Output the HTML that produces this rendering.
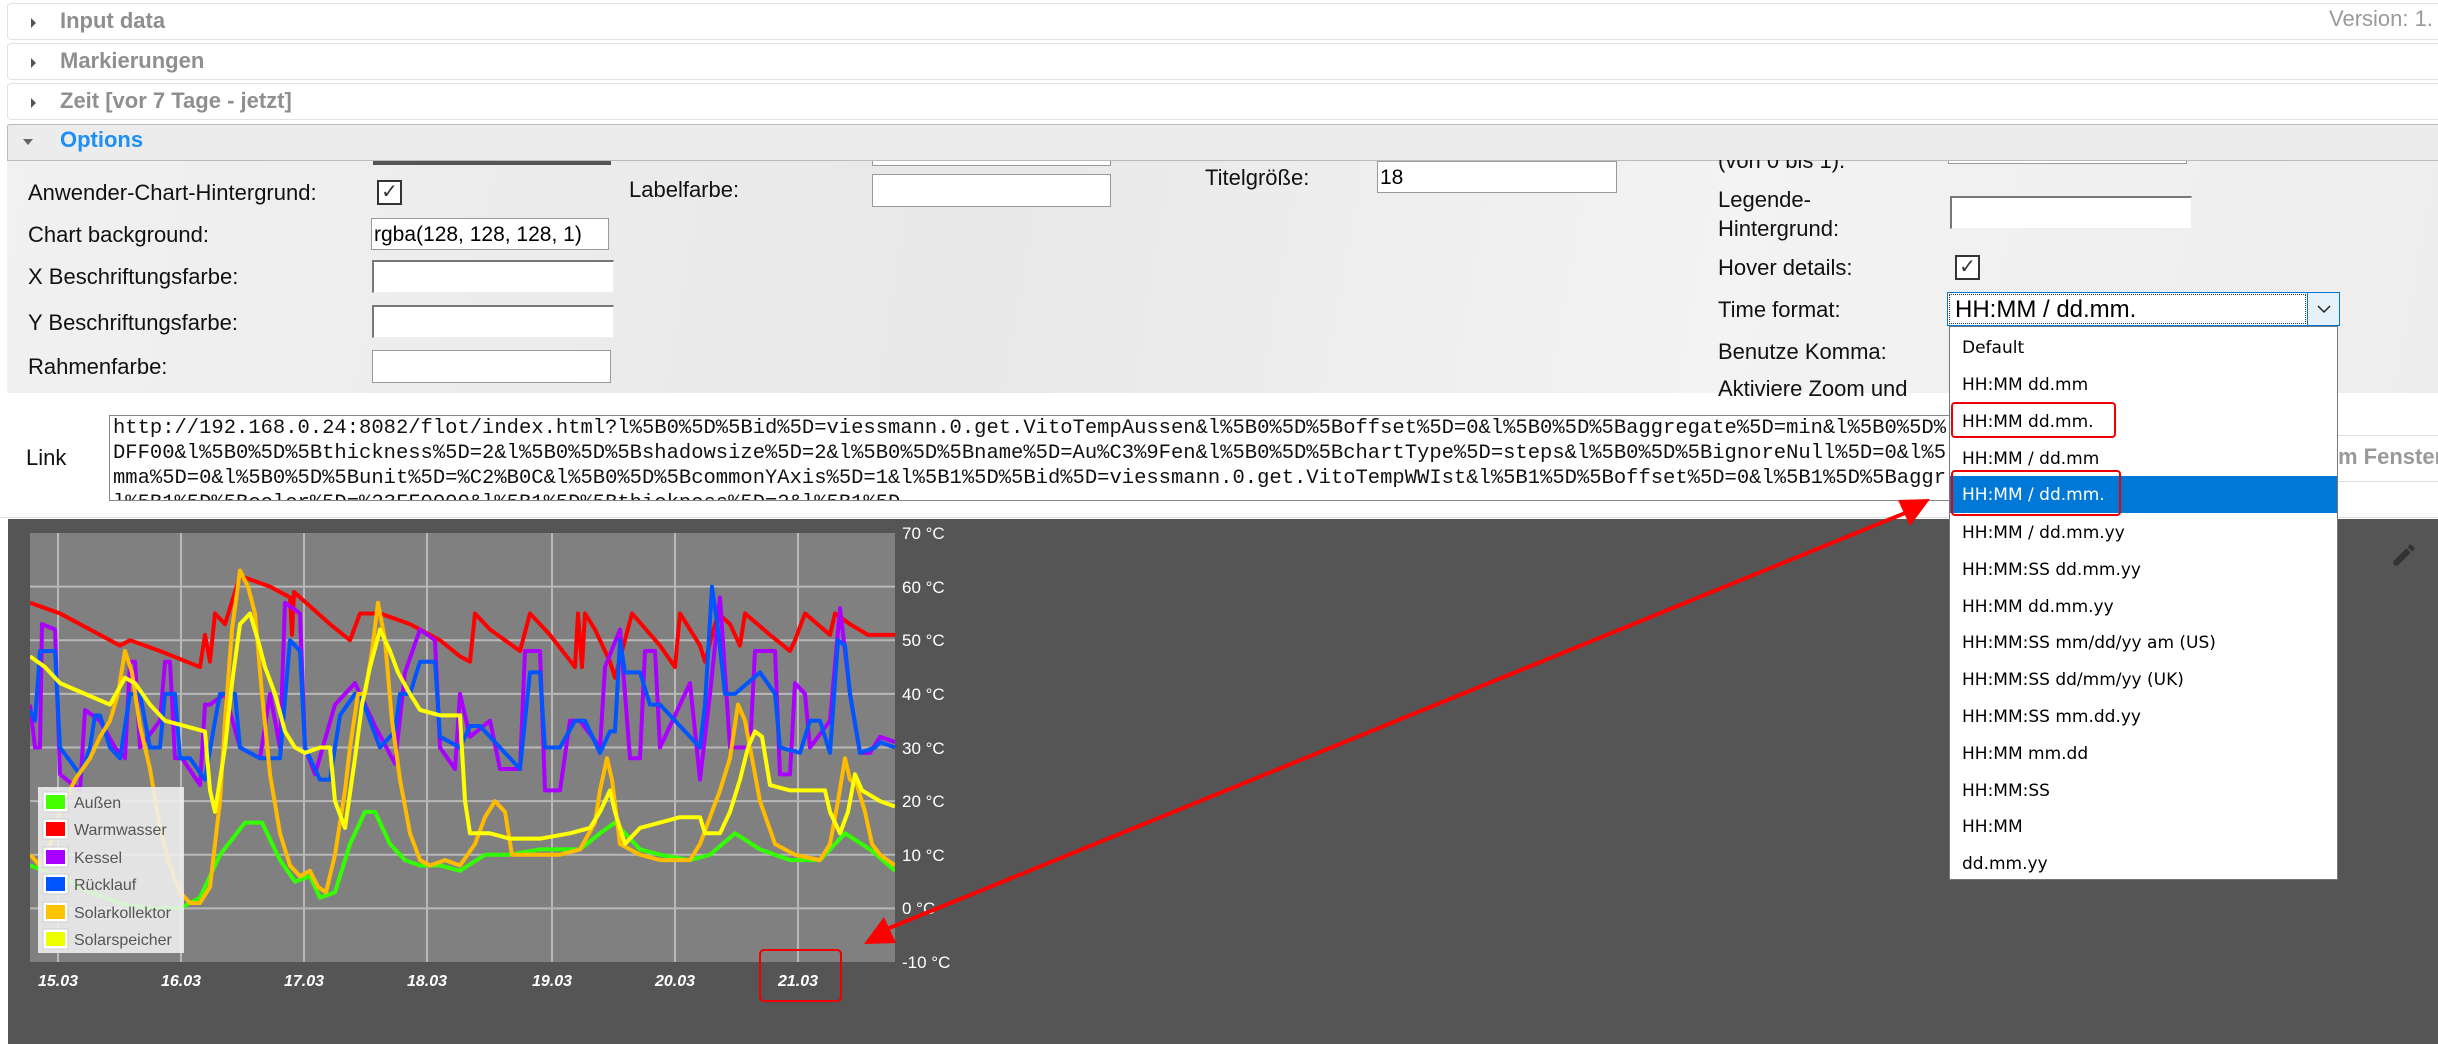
<!DOCTYPE html>
<html><head><meta charset="utf-8">
<style>
*{margin:0;padding:0;box-sizing:border-box}
body{width:2438px;height:1044px;overflow:hidden;background:#fff;font-family:"Liberation Sans",Arial,sans-serif;position:relative}
.a{position:absolute}
.hdr{position:absolute;left:7px;width:2440px;height:37px;border:1px solid #e2e2e2;border-radius:4px;background:#fff}
.hdr .t{position:absolute;left:52px;top:4px;font-weight:bold;font-size:22px;color:#8f8f8f}
.tri{position:absolute;left:23px;top:14px;width:0;height:0;border-top:5px solid transparent;border-bottom:5px solid transparent;border-left:5px solid #555}
.lbl{position:absolute;font-size:22px;color:#111;white-space:nowrap}
.inp{position:absolute;background:#fff;border:1px solid #999}
.inp2{position:absolute;background:#fff;border-top:2px solid #777;border-left:2px solid #777;border-right:1px solid #eee;border-bottom:1px solid #eee}
.cb{position:absolute;width:25px;height:25px;border:2px solid #333;background:#fff;font-size:20px;line-height:20px;text-align:center;color:#333}
.dd div{position:absolute;left:12px;font-family:"DejaVu Sans",sans-serif;font-size:17px;color:#000;white-space:nowrap}
</style></head><body>

<div class="hdr" style="top:3px"><div class="tri"></div><div class="t">Input data</div></div>
<div class="hdr" style="top:43px"><div class="tri"></div><div class="t">Markierungen</div></div>
<div class="hdr" style="top:83px"><div class="tri"></div><div class="t">Zeit [vor 7 Tage - jetzt]</div></div>
<div class="a" style="left:2329px;top:6px;font-size:22px;color:#999;white-space:nowrap">Version: 1.</div>

<div class="a" style="left:7px;top:124px;width:2440px;height:269px;background:linear-gradient(100deg,#f1f1f1 0%,#e8e8e8 40%,#f3f3f3 70%,#ededed 100%)"></div>
<div class="a" style="left:7px;top:124px;width:2440px;height:37px;background:#ececec;border:1px solid #bbb;border-radius:3px 3px 0 0"></div>
<div class="a" style="left:23px;top:139px;width:0;height:0;border-left:5px solid transparent;border-right:5px solid transparent;border-top:6px solid #666"></div>
<div class="a" style="left:60px;top:127px;font-weight:bold;font-size:22px;color:#1e8ff5">Options</div>

<div class="a" style="left:373px;top:161px;width:238px;height:4px;background:#555"></div>
<div class="a" style="left:872px;top:161px;width:239px;height:5px;border:1px solid #999;border-top:none;background:#fff"></div>
<div class="a" style="left:1948px;top:161px;width:239px;height:3px;border:1px solid #999;border-top:none;background:#fff"></div>

<div class="lbl" style="left:28px;top:180px">Anwender-Chart-Hintergrund:</div>
<div class="cb" style="left:377px;top:180px">✓</div>
<div class="lbl" style="left:28px;top:222px">Chart background:</div>
<div class="inp" style="left:371px;top:218px;width:238px;height:32px;font-size:21px;padding:4px 2px;color:#000">rgba(128, 128, 128, 1)</div>
<div class="lbl" style="left:28px;top:264px">X Beschriftungsfarbe:</div>
<div class="inp2" style="left:372px;top:260px;width:242px;height:33px"></div>
<div class="lbl" style="left:28px;top:310px">Y Beschriftungsfarbe:</div>
<div class="inp2" style="left:372px;top:305px;width:242px;height:33px"></div>
<div class="lbl" style="left:28px;top:354px">Rahmenfarbe:</div>
<div class="inp" style="left:372px;top:350px;width:239px;height:33px"></div>

<div class="lbl" style="left:629px;top:177px">Labelfarbe:</div>
<div class="inp" style="left:872px;top:174px;width:239px;height:33px"></div>

<div class="lbl" style="left:1205px;top:165px">Titelgröße:</div>
<div class="inp" style="left:1377px;top:161px;width:240px;height:32px;font-size:21px;padding:4px 2px">18</div>

<div class="lbl" style="left:1718px;top:148px;clip-path:inset(12px 0 0 0)">(von 0 bis 1).</div>
<div class="lbl" style="left:1718px;top:187px">Legende-</div>
<div class="lbl" style="left:1718px;top:216px">Hintergrund:</div>
<div class="inp2" style="left:1950px;top:196px;width:242px;height:33px"></div>
<div class="lbl" style="left:1718px;top:255px">Hover details:</div>
<div class="cb" style="left:1955px;top:255px">✓</div>
<div class="lbl" style="left:1718px;top:297px">Time format:</div>
<div class="lbl" style="left:1718px;top:339px">Benutze Komma:</div>
<div class="lbl" style="left:1718px;top:376px;clip-path:inset(0 0 5px 0)">Aktiviere Zoom und</div>

<div class="a" style="left:1947px;top:292px;width:393px;height:34px;border:1px solid #0078d7;background:#fff"></div>
<div class="a" style="left:1949px;top:294px;width:357px;height:30px;border:1px dotted #333"></div>
<div class="a" style="left:1955px;top:296px;font-size:24px;color:#000">HH:MM / dd.mm.</div>
<div class="a" style="left:2307px;top:292px;width:33px;height:34px;background:#e5f1fb;border:1px solid #0078d7"></div>
<svg class="a" style="left:2317px;top:304px" width="14" height="10"><path d="M1 2 L7 8 L13 2" fill="none" stroke="#222" stroke-width="1.5"/></svg>

<div class="lbl" style="left:26px;top:445px">Link</div>
<div class="a" style="left:109px;top:415px;width:1850px;height:86px;border:1px solid #888;overflow:hidden;background:#fff">
<div style="position:absolute;left:3px;top:0;font-family:'Liberation Mono',monospace;font-size:20.5px;line-height:25px;color:#111;white-space:pre">http://192.168.0.24:8082/flot/index.html?l%5B0%5D%5Bid%5D=viessmann.0.get.VitoTempAussen&amp;l%5B0%5D%5Boffset%5D=0&amp;l%5B0%5D%5Baggregate%5D=min&amp;l%5B0%5D%
DFF00&amp;l%5B0%5D%5Bthickness%5D=2&amp;l%5B0%5D%5Bshadowsize%5D=2&amp;l%5B0%5D%5Bname%5D=Au%C3%9Fen&amp;l%5B0%5D%5BchartType%5D=steps&amp;l%5B0%5D%5BignoreNull%5D=0&amp;l%5
mma%5D=0&amp;l%5B0%5D%5Bunit%5D=%C2%B0C&amp;l%5B0%5D%5BcommonYAxis%5D=1&amp;l%5B1%5D%5Bid%5D=viessmann.0.get.VitoTempWWIst&amp;l%5B1%5D%5Boffset%5D=0&amp;l%5B1%5D%5Baggr
l%5B1%5D%5Bcolor%5D=%23FF0000&amp;l%5B1%5D%5Bthickness%5D=2&amp;l%5B1%5D</div></div>
<div class="a" style="left:2300px;top:435px;width:140px;height:47px;border-top:1px solid #ddd;border-bottom:1px solid #ddd;background:#fff"></div>
<div class="a" style="left:2338px;top:444px;font-size:22px;font-weight:bold;color:#999;white-space:nowrap">m Fenster</div>
<div class="a" style="left:0;top:517px;width:2438px;height:1px;background:#ddd"></div>

<div class="a" style="left:8px;top:519px;width:2430px;height:525px;background:#555"></div>
<svg class="a" style="left:2390px;top:541px" width="28" height="28" viewBox="0 0 24 24"><path d="M3 17.25V21h3.75L17.81 9.94l-3.75-3.75L3 17.25zM20.71 7.04a1 1 0 0 0 0-1.41l-2.34-2.34a1 1 0 0 0-1.41 0l-1.83 1.83 3.75 3.75 1.83-1.83z" fill="#333"/></svg>

<svg class="a" style="left:0;top:0" width="2438" height="1044">
<defs><clipPath id="pc"><rect x="30" y="533" width="865" height="429"/></clipPath></defs>
<rect x="30" y="533" width="865" height="429" fill="#808080"/>
<g stroke="#b8b8b8" stroke-width="2">
<line x1="58" y1="533" x2="58" y2="962"/><line x1="181" y1="533" x2="181" y2="962"/><line x1="304" y1="533" x2="304" y2="962"/><line x1="427" y1="533" x2="427" y2="962"/><line x1="552" y1="533" x2="552" y2="962"/><line x1="675" y1="533" x2="675" y2="962"/><line x1="798" y1="533" x2="798" y2="962"/>
<line x1="30" y1="586.6" x2="895" y2="586.6"/><line x1="30" y1="640.3" x2="895" y2="640.3"/><line x1="30" y1="693.9" x2="895" y2="693.9"/><line x1="30" y1="747.5" x2="895" y2="747.5"/><line x1="30" y1="801.1" x2="895" y2="801.1"/><line x1="30" y1="854.8" x2="895" y2="854.8"/><line x1="30" y1="908.4" x2="895" y2="908.4"/>
</g>
<g clip-path="url(#pc)" fill="none" stroke-width="4" stroke-linejoin="round">
<g transform="translate(0,533) scale(1,-5.3625) translate(0,-70)">
<polyline vector-effect="non-scaling-stroke" stroke="#33ff00" points="30,8 60,6 90,3 120,1 150,0 180,0 200,2 220,10 245,16 262,16 280,9 295,5 310,6 320,2 335,3 350,12 365,18 375,18 390,12 405,9 420,8 440,8 460,7 485,10 510,10 540,11 580,11 600,14 615,16 640,11 660,10 690,9 710,10 735,14 760,11 790,9 820,9 845,14 870,11 895,7"/>
<polyline vector-effect="non-scaling-stroke" stroke="#ff0000" points="30,57 60,55 90,52 120,49 130,50 160,48 200,45 205,51 210,46 215,55 225,53 240,62 270,60 290,58 292,51 294,59 300,58 330,53 350,50 360,55 380,55 410,53 440,50 460,47 470,46 475,55 490,52 520,48 530,55 550,51 575,45 578,55 582,45 585,55 595,52 610,46 615,43 632,55 660,49 675,45 680,55 700,49 705,46 718,55 730,53 740,49 745,55 770,51 790,48 795,50 805,55 830,51 835,55 850,53 868,51 895,51"/>
<polyline vector-effect="non-scaling-stroke" stroke="#aa00ff" points="30,38 35,30 40,30 42,53 55,52 60,25 80,22 85,37 100,35 115,30 125,28 130,46 135,46 140,30 160,35 165,46 170,46 175,28 182,28 200,23 205,38 210,38 225,40 240,30 260,28 270,40 280,30 285,57 300,55 305,30 315,25 335,38 355,42 375,34 395,27 405,44 420,52 435,50 440,30 455,26 460,40 470,32 490,35 500,26 520,26 525,48 540,48 545,22 560,22 570,35 580,35 600,30 605,45 620,52 630,28 640,28 645,48 655,48 660,30 690,42 700,24 710,40 720,58 730,30 750,30 755,48 775,48 780,25 790,25 795,42 805,40 810,30 830,35 840,56 850,40 860,29 870,29 880,32 895,31"/>
<polyline vector-effect="non-scaling-stroke" stroke="#0055ff" points="30,37 35,35 40,48 55,48 60,30 80,25 90,30 95,36 100,36 110,30 120,28 130,40 140,40 150,30 160,30 165,40 175,40 180,28 190,28 205,24 215,35 220,40 235,40 240,30 260,28 280,28 290,50 300,48 305,30 320,24 330,24 340,36 355,40 360,40 380,30 395,33 400,40 410,40 420,46 435,46 440,32 460,30 470,34 480,34 500,30 520,26 530,44 540,44 545,30 560,30 575,35 585,35 600,29 610,33 615,33 620,50 625,44 640,44 650,38 660,38 690,32 700,30 705,38 712,60 718,52 725,40 735,40 760,44 775,40 780,30 800,29 810,35 820,35 830,29 838,50 845,49 850,40 860,29 875,30 880,31 895,30"/>
<polyline vector-effect="non-scaling-stroke" stroke="#ffbb00" points="30,10 40,8 50,12 60,18 75,24 90,28 100,32 110,35 118,40 125,48 132,44 140,34 150,26 160,15 170,8 180,3 190,1 200,1 210,4 220,20 225,35 232,52 240,63 248,60 255,55 262,40 270,25 280,14 290,8 300,6 310,7 318,4 326,3 335,10 345,22 350,30 358,40 365,40 372,48 378,57 385,50 392,35 400,24 410,14 420,9 430,8 445,9 460,8 475,12 485,17 495,20 505,18 512,10 530,10 560,10 580,11 595,16 600,22 607,28 612,24 620,12 640,10 660,9 690,9 700,12 712,18 720,22 730,28 738,38 745,35 752,28 760,20 775,12 795,10 820,9 830,12 838,20 845,28 850,24 857,23 865,18 872,12 880,10 895,8"/>
<polyline vector-effect="non-scaling-stroke" stroke="#ffff00" points="30,47 45,45 60,42 85,40 110,38 125,43 135,42 150,38 165,35 185,34 205,33 210,22 215,18 225,30 232,42 240,53 250,55 258,50 265,45 275,40 285,33 295,30 305,29 320,30 330,30 335,20 345,15 355,28 362,38 370,45 380,52 390,48 398,44 410,40 420,37 440,36 460,36 465,20 470,14 490,14 510,13 540,13 570,14 590,15 600,18 610,22 615,18 625,12 640,15 660,16 680,17 700,17 705,14 720,14 730,18 740,24 748,30 755,33 762,32 770,23 790,22 825,22 830,18 840,14 848,18 855,25 862,22 880,20 895,19"/>
</g></g>
<g font-family="Liberation Sans,sans-serif" font-size="17" fill="#fff">
<text x="902" y="539">70 °C</text><text x="902" y="593">60 °C</text><text x="902" y="646">50 °C</text><text x="902" y="700">40 °C</text><text x="902" y="754">30 °C</text><text x="902" y="807">20 °C</text><text x="902" y="861">10 °C</text><text x="902" y="914">0 °C</text><text x="902" y="968">-10 °C</text>
</g>
<g font-family="Liberation Sans,sans-serif" font-size="16" font-weight="bold" font-style="italic" fill="#fff" text-anchor="middle">
<text x="58" y="986">15.03</text><text x="181" y="986">16.03</text><text x="304" y="986">17.03</text><text x="427" y="986">18.03</text><text x="552" y="986">19.03</text><text x="675" y="986">20.03</text><text x="798" y="986">21.03</text>
</g>
<rect x="38" y="787" width="146" height="166" fill="#f0f0f0" fill-opacity="0.88"/>
<g stroke="#ccc" stroke-width="1">
<rect x="43" y="792" width="25" height="20" fill="#fff"/><rect x="43" y="819" width="25" height="20" fill="#fff"/><rect x="43" y="847" width="25" height="20" fill="#fff"/><rect x="43" y="874" width="25" height="20" fill="#fff"/><rect x="43" y="902" width="25" height="20" fill="#fff"/><rect x="43" y="929" width="25" height="20" fill="#fff"/>
</g>
<rect x="46" y="795" width="19" height="14" fill="#44ff00"/><rect x="46" y="822" width="19" height="14" fill="#ff0000"/><rect x="46" y="850" width="19" height="14" fill="#aa00ff"/><rect x="46" y="877" width="19" height="14" fill="#0055ff"/><rect x="46" y="905" width="19" height="14" fill="#ffc400"/><rect x="46" y="932" width="19" height="14" fill="#eeff00"/>
<g font-family="Liberation Sans,sans-serif" font-size="16" fill="#555">
<text x="74" y="808">Außen</text><text x="74" y="835">Warmwasser</text><text x="74" y="863">Kessel</text><text x="74" y="890">Rücklauf</text><text x="74" y="918">Solarkollektor</text><text x="74" y="945">Solarspeicher</text>
</g>
<rect x="760" y="950" width="81" height="51" rx="4" fill="none" stroke="#e00" stroke-width="2"/>
</svg>

<div class="a dd" style="left:1949px;top:326px;width:389px;height:554px;background:#fff;border:1px solid #777">
<div style="top:11px">Default</div>
<div style="top:48px">HH:MM dd.mm</div>
<div style="top:85px">HH:MM dd.mm.</div>
<div style="top:122px">HH:MM / dd.mm</div>
<div style="left:0;top:149px;width:387px;height:37px;background:#0078d7"></div>
<div style="top:158px;color:#fff">HH:MM / dd.mm.</div>
<div style="top:196px">HH:MM / dd.mm.yy</div>
<div style="top:233px">HH:MM:SS dd.mm.yy</div>
<div style="top:270px">HH:MM dd.mm.yy</div>
<div style="top:306px">HH:MM:SS mm/dd/yy am (US)</div>
<div style="top:343px">HH:MM:SS dd/mm/yy (UK)</div>
<div style="top:380px">HH:MM:SS mm.dd.yy</div>
<div style="top:417px">HH:MM mm.dd</div>
<div style="top:454px">HH:MM:SS</div>
<div style="top:490px">HH:MM</div>
<div style="top:527px">dd.mm.yy</div>
</div>
<div class="a" style="left:1951px;top:402px;width:165px;height:36px;border:2px solid #e00;border-radius:4px"></div>
<div class="a" style="left:1951px;top:470px;width:170px;height:46px;border:2px solid #e00;border-radius:4px"></div>

<svg class="a" style="left:0;top:0" width="2438" height="1044">
<line x1="1910" y1="511" x2="882" y2="931" stroke="#ff0000" stroke-width="4"/>
<polygon points="1930,499 1898,500 1910,526" fill="#ff0000"/>
<polygon points="864,944 896,943 884,917" fill="#ff0000"/>
</svg>
</body></html>
